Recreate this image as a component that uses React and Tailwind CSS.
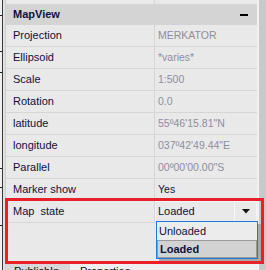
import React from "react";

const rows = [
  { label: "Projection", value: "MERKATOR", dim: true },
  { label: "Ellipsoid", value: "*varies*", dim: true },
  { label: "Scale", value: "1:500", dim: true },
  { label: "Rotation", value: "0.0", dim: true },
  { label: "latitude", value: "55º46'15.81\"N", dim: true },
  { label: "longitude", value: "037º42'49.44\"E", dim: true },
  { label: "Parallel", value: "00º00'00.00\"S", dim: true },
  { label: "Marker show", value: "Yes", dim: false },
];

const ticks = [15, 51, 72, 168, 187, 225];

const Row = ({ label, children }) => (
  <div className="flex h-[22px] border-b border-[#d6d6d6]">
    <div className="w-[149px] flex items-center pl-[7px] border-r border-[#d6d6d6] text-[#10103c] whitespace-pre">
      {label}
    </div>
    <div className="flex-1 flex items-center">{children}</div>
  </div>
);

const App = () => {
  return (
    <div
      className="relative w-[266px] h-[270px] overflow-hidden bg-[#e9e9e9] flex text-[11px] leading-none"
      style={{ fontFamily: '"Liberation Sans", Arial, sans-serif' }}
    >
      {/* left edge */}
      <div className="relative w-[6px] flex">
        <div className="w-[2px] bg-[#f0f0f0]" />
        <div className="w-[1px] bg-[#3a3a3a]" />
        <div className="w-[2px] bg-[#e2e2e2]" />
        <div className="w-[1px] bg-[#cfcfcf]" />
        {ticks.map((t) => (
          <div key={t} className="absolute left-0 w-[2px] h-[1px] bg-[#222]" style={{ top: t }} />
        ))}
      </div>

      {/* grid */}
      <div className="w-[251px] flex flex-col">
        <div className="h-[4px] flex">
          <div className="w-[149px] border-r border-[#d6d6d6]" />
        </div>
        <div className="h-[21px] bg-[#d4d4d4] flex items-center justify-between pl-[7px] pr-[9px]">
          <span className="font-bold text-[#10103c]">MapView</span>
          <div className="w-[8px] h-[2px] bg-black" />
        </div>
        {rows.map((r) => (
          <Row key={r.label} label={r.label}>
            <span className={"pl-[3px] text-[10.5px] " + (r.dim ? "text-[#8e8e9c]" : "text-[#10103c]")}>
              {r.value}
            </span>
          </Row>
        ))}
        <Row label="Map  state">
          <div className="flex-1 h-full flex items-center border border-[#f4f4f4]">
            <span className="flex-1 pl-[2px] text-[#10103c]">Loaded</span>
            <div className="w-[22px] h-full flex items-center justify-center border-l border-[#f8f8f8]">
              <svg width="8" height="5" viewBox="0 0 8 5">
                <path d="M0 0h8L4 4.5z" fill="#111" />
              </svg>
            </div>
          </div>
        </Row>
        <div className="flex-1" />
        <div className="h-[8px] flex text-[#111] bg-[#f0f0f0] -ml-[6px] overflow-hidden">
          <div className="w-[70px] bg-[#d8d8d8] pl-[14px] pt-[4px]">PublishIn</div>
          <div className="pl-[10px] pt-[4px]">Properties</div>
        </div>
      </div>

      {/* scrollbar */}
      <div className="w-[2px] bg-[#f2f2f2]" />
      <div className="flex-1 bg-[#c9c9c9]" />

      {/* dropdown list */}
      <div className="absolute left-[156px] top-[221px] w-[102px] h-[38px] border border-[#1e7bd6] bg-[#ececec] shadow-[3px_3px_0_#a8a8a8] flex flex-col text-[#10103c]">
        <div className="h-[18px] flex items-center pl-[2px]">Unloaded</div>
        <div className="flex-1 flex items-center pl-[2px] font-bold bg-[#d2d2d2] border border-[#9a9a9a]">
          Loaded
        </div>
      </div>

      {/* highlight */}
      <div className="absolute left-[5px] top-[198px] w-[259px] h-[66px] border-[3px] border-[#e8202a]" />
    </div>
  );
};

export default App;
